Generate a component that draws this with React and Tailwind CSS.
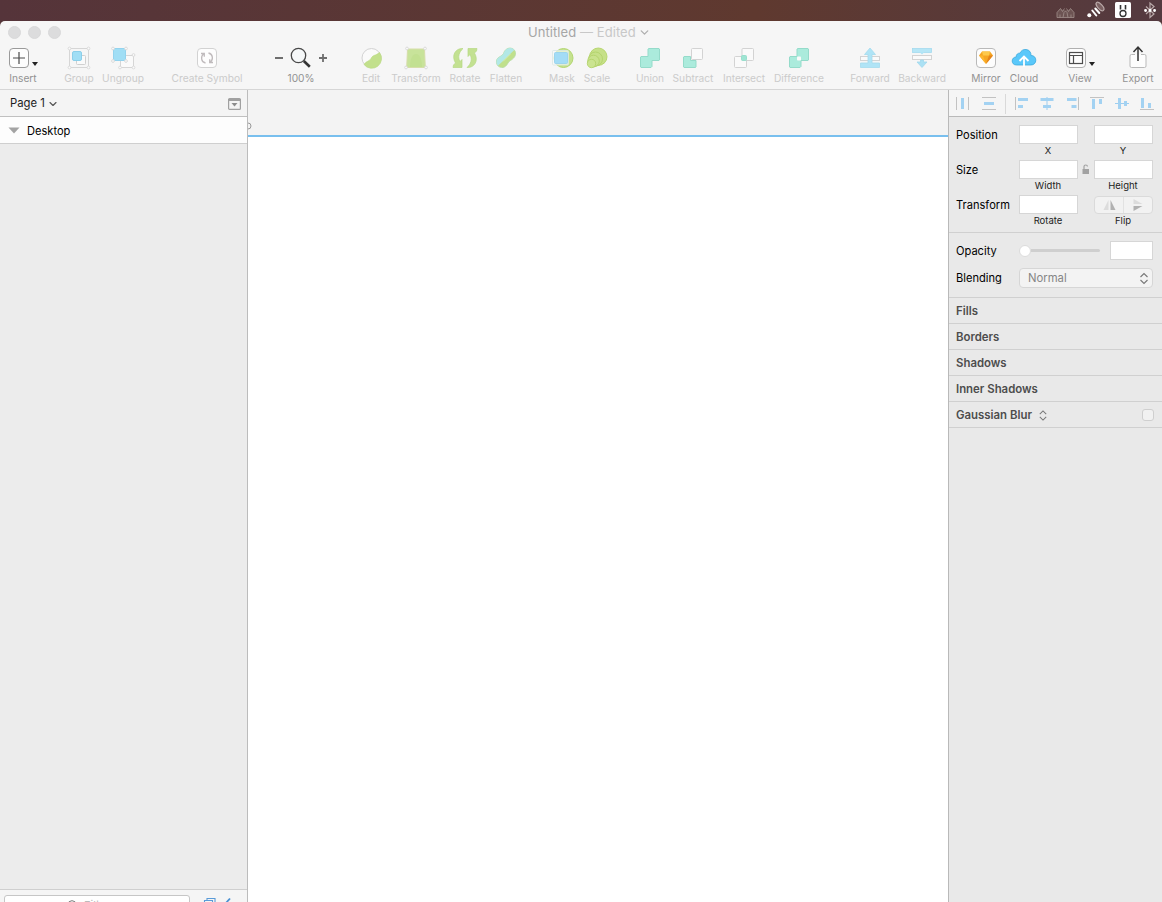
import clsx from "clsx";
import { ChevronDown } from "lucide-react";

const Icon = ({ children }) => (
    <svg width="24" height="24" viewBox="0 0 24 24" fill="none" className="shrink-0 overflow-visible">
        {children}
    </svg>
);

const Dots = ({ points }) => points.map(([x, y]) => (
    <circle key={`${x}-${y}`} cx={x} cy={y} r="1.4" fill="#fafafa" stroke="#d4d4d4" strokeWidth="0.8" />
));

const Box = ({ x = 2, stroke = "#b9b9b9" }) => (
    <rect x={x + 0.5} y="2.5" width="19" height="19" rx="3.5" fill="#fdfdfd" stroke={stroke} />
);

const icons = {
    insert: (
        <Icon>
            <Box x={-2} stroke="#9a9a9a" />
            <path d="M8 6v12M2 12h12" stroke="#4a4a4a" strokeWidth="1.2" />
            <path d="M21 16h6l-3 4z" fill="#222" />
        </Icon>
    ),
    group: (
        <Icon>
            <rect x="2.5" y="2.5" width="19" height="19" stroke="#d6d6d6" />
            <rect x="9.5" y="9.5" width="9" height="9" rx="1" fill="#fafafa" stroke="#d0d0d0" />
            <rect x="5.5" y="5.5" width="9" height="9" rx="1.5" fill="#a0def5" stroke="#8bcfea" />
            <Dots points={[[2.5, 2.5], [21.5, 2.5], [2.5, 21.5], [21.5, 21.5]]} />
        </Icon>
    ),
    ungroup: (
        <Icon>
            <rect x="9.5" y="9.5" width="13" height="12" fill="#fafafa" stroke="#d6d6d6" />
            <rect x="2.5" y="2.5" width="12" height="12" rx="1" fill="#a0def5" stroke="#93d3ee" />
            <Dots points={[[2, 2.5], [15, 2.5], [2, 15], [15, 15], [22.5, 9], [9, 21.5], [22.5, 21.5]]} />
        </Icon>
    ),
    symbol: (
        <Icon>
            <Box stroke="#d2d2d2" />
            <path d="M10.5 17c-4.500-1-5-6.500-2-9M6 7.500h3.300v3.300M13.500 7c4.500 1 5 6.500 2 9M18 16.500h-3.300v-3.300" stroke="#c0bbbd" strokeWidth="1.3" />
        </Icon>
    ),
    zoom: (
        <Icon>
            <path d="M-14 12h8M30 12h8M34 8v8" stroke="#6e6e6e" strokeWidth="1.8" />
            <circle cx="9.5" cy="9.5" r="7.2" fill="#f5f7f8" stroke="#484848" strokeWidth="1.3" />
            <path d="M14.8 15l6 5.8" stroke="#333" strokeWidth="2.6" />
        </Icon>
    ),
    edit: (
        <Icon>
            <circle cx="12.5" cy="12" r="9.5" fill="#fafafa" stroke="#d3d3d3" />
            <path d="M20.5 6.500A9.800 9.800 0 1 1 5 18.500C7 15 10.500 15.500 12 12.500C14 8.500 16.500 10 20.500 6.500z" fill="#c2e08c" stroke="#b8d97f" strokeWidth="0.6" />
        </Icon>
    ),
    transform: (
        <Icon>
            <path d="M3.5 3h17l.8 18.5H2.700z" fill="#c8e39a" stroke="#d6dea9" />
            <path d="M6 21c0-9 3-13 6-13s6 4 6 13z" fill="#b9dc84" opacity=".4" />
            <Dots points={[[3, 2.5], [21, 2.5], [2, 21.5], [22, 21.5]]} />
        </Icon>
    ),
    rotate: (
        <Icon>
            <path d="M10 2.500C2.500 2-2 9.500 2.500 17L.5 19L0 21.500h9V13.500L7 15.500C4.500 11 6 6 10 2.500z" fill="#c3e191" stroke="#b6d884" strokeWidth="0.7" />
            <path d="M14 21.500C21.500 22 26 14.500 21.500 7L23.500 5L24 2.500h-9V10.500L17 8.500C19.500 13 18 18 14 21.500z" fill="#c3e191" stroke="#b6d884" strokeWidth="0.7" />
        </Icon>
    ),
    flatten: (
        <Icon>
            <path d="M2.500 15C3 10.500 7.500 11 9.500 7.500C11.500 1 18.500.5 21 5C23 10 19 13 16.500 14.500C13.500 16 13.500 20.500 9 21.500C5 22 2 19 2.500 15z" fill="#c0e08c" stroke="#b5dca5" strokeWidth="0.8" />
            <path d="M2.500 15C3 10.500 7.500 11 9.500 7.500C11.500 1.500 17.500.8 20.300 4L4 19.800C2.800 18.500 2.200 17 2.500 15z" fill="#b2e8e6" />
            <path d="M9 15.500L16.500 8" stroke="#d9eeb0" strokeWidth="0.8" />
        </Icon>
    ),
    mask: (
        <Icon>
            <circle cx="13.5" cy="12" r="9.5" fill="#c5e28e" stroke="#b3d672" />
            <rect x="2.5" y="4.5" width="16" height="14.5" rx="1" fill="#fafafa" fillOpacity=".6" stroke="#d9e6e2" strokeWidth="0.8" />
            <rect x="4.5" y="6.500" width="13" height="11" rx="1" fill="#a3dcf6" stroke="#92d0ef" strokeWidth="0.8" />
        </Icon>
    ),
    scale: (
        <Icon>
            <path d="M2.500 15.500L6 6.500L20 17L9 21.500z" fill="#c6e088" />
            <circle cx="13.3" cy="10.7" r="8.7" fill="#c6e088" stroke="#b3d468" strokeWidth="0.9" />
            <circle cx="10.5" cy="13" r="7" fill="#c6e088" stroke="#b0d067" strokeWidth="0.8" />
            <circle cx="8.5" cy="15" r="5.8" fill="#c9e28d" stroke="#b0d067" strokeWidth="0.8" />
            <circle cx="6.5" cy="17.500" r="4.2" fill="#cbe490" stroke="#b0d067" strokeWidth="0.8" />
        </Icon>
    ),
    union: (
        <Icon>
            <path d="M11 2.500h10l.5.5v11l-.5.500h-7v6l-1 1H3l-.5-.5V11l.5-.5h7V3z" fill="#abebdc" stroke="#95dbca" />
        </Icon>
    ),
    subtract: (
        <Icon>
            <rect x="10.5" y="2.5" width="11" height="11" rx="1" fill="#fafafa" stroke="#d3d3d3" />
            <path d="M9.500 10.500H3l-.5.5v10l.5.500h11.500l.5-.5v-6.500h-5.500z" fill="#abebdc" stroke="#95dbca" />
        </Icon>
    ),
    intersect: (
        <Icon>
            <rect x="2.5" y="10.5" width="12" height="11" rx="1" fill="#fafafa" stroke="#d3d3d3" />
            <rect x="10" y="2.5" width="11.5" height="12" rx="1" fill="#fafafa" stroke="#d3d3d3" />
            <rect x="9.5" y="9.5" width="5" height="5" rx="1" fill="#9fe5d3" stroke="#98dfcd" />
        </Icon>
    ),
    difference: (
        <Icon>
            <path d="M11 2.500h10l.5.5v11l-.5.500h-7v6l-1 1H3l-.5-.5V11l.5-.5h7V3z" fill="#abebdc" stroke="#95dbca" />
            <rect x="10" y="10.5" width="4" height="4" rx=".8" fill="#fafafa" />
        </Icon>
    ),
    forward: (
        <Icon>
            <rect x="2.5" y="10.5" width="19" height="4" fill="#fafafa" stroke="#d3d3d3" />
            <path d="M12 2l5.500 6.500H14V17h7.500v4.500h-19V17H10V8.500H6.500z" fill="#b0e4f6" stroke="#a5daee" strokeWidth="0.8" />
        </Icon>
    ),
    backward: (
        <Icon>
            <rect x="2.5" y="2.5" width="19" height="4" fill="#b6e6f6" stroke="#a5daee" strokeWidth="0.8" />
            <path d="M9.500 6h5L12 8.500z" fill="#b0e4f6" />
            <rect x="2.5" y="9.5" width="19" height="4" fill="#fafafa" stroke="#d3d3d3" />
            <path d="M10.500 14h3v2H17l-5 5.500L7 16h3.500z" fill="#abe1f4" stroke="#a2d8ec" strokeWidth="0.8" />
        </Icon>
    ),
    mirror: (
        <Icon>
            <Box />
            <path d="M8 5.500h8l3 4-7 8.500-7-8.500z" fill="#f6a623" />
            <path d="M8 5.500h8l-1 4H9z" fill="#fdc94b" />
            <path d="M5 9.500h4l3 8.500z" fill="#fdb62f" />
            <path d="M15 9.500h4L12 18z" fill="#e4831b" />
        </Icon>
    ),
    cloud: (
        <Icon>
            <path d="M4.500 19C1.500 19 .2 17 .2 15c0-2.500 1.800-4 4-4C4 8.500 6 6.800 8 7.200C9 4.500 11.500 3.200 14 3.500c3.500.3 5.200 3 5 6c3 0 4.800 2 4.800 4.700c0 2.800-2 4.800-5 4.800z" fill="#5ac8fa" stroke="#3aa9dd" strokeWidth="0.8" />
            <path d="M12 21v-9.500M7.500 15L12 10.500l4.500 4.500" stroke="#fff" strokeWidth="1.8" />
        </Icon>
    ),
    view: (
        <Icon>
            <Box x={-2} stroke="#b0b0b0" />
            <rect x="1.5" y="6.5" width="13" height="11" stroke="#4d4d4d" strokeWidth="1.2" />
            <path d="M1.500 9.500h13M5.500 9.500v8" stroke="#4d4d4d" strokeWidth="1.2" />
            <path d="M21 16h6l-3 4z" fill="#222" />
        </Icon>
    ),
    export: (
        <Icon>
            <path d="M9 8.500H5.500q-1.500 0-1.500 1.500v10q0 1.500 1.500 1.500h13q1.500 0 1.500-1.500V10q0-1.500-1.500-1.500H15" fill="#fdfdfd" stroke="#b9b9b9" />
            <path d="M12 15V1.500M7.500 6L12 1l4.500 5" stroke="#333" strokeWidth="1.5" />
        </Icon>
    ),
};

const tools = [
    { icon: "insert", label: "Insert", className: "w-[28px] ml-[9px]", active: true },
    { icon: "group", label: "Group", className: "w-[30px] ml-[27px]" },
    { icon: "ungroup", label: "Ungroup", className: "w-[42px] ml-[8px]" },
    { icon: "symbol", label: "Create Symbol", className: "w-[70px] ml-[28px]" },
    { icon: "zoom", label: "100%", className: "w-[54px] ml-[32px]", active: true },
    { icon: "edit", label: "Edit", className: "w-[20px] ml-[33px]" },
    { icon: "transform", label: "Transform", className: "w-[48px] ml-[11px]" },
    { icon: "rotate", label: "Rotate", className: "w-[32px] ml-[9px]" },
    { icon: "flatten", label: "Flatten", className: "w-[34px] ml-[8px]" },
    { icon: "mask", label: "Mask", className: "w-[26px] ml-[26px]" },
    { icon: "scale", label: "Scale", className: "w-[26px] ml-[9px]" },
    { icon: "union", label: "Union", className: "w-[28px] ml-[26px]" },
    { icon: "subtract", label: "Subtract", className: "w-[42px] ml-[8px]" },
    { icon: "intersect", label: "Intersect", className: "w-[42px] ml-[9px]" },
    { icon: "difference", label: "Difference", className: "w-[50px] ml-[9px]" },
    { icon: "forward", label: "Forward", className: "w-[40px] ml-[26px]" },
    { icon: "backward", label: "Backward", className: "w-[46px] ml-[9px]" },
    { icon: "mirror", label: "Mirror", className: "w-[28px] ml-[27px]", active: true },
    { icon: "cloud", label: "Cloud", className: "w-[28px] ml-[10px]", active: true },
    { icon: "view", label: "View", className: "w-[24px] ml-[30px]", active: true },
    { icon: "export", label: "Export", className: "w-[32px] ml-[30px]", active: true },
];

const MenuBar = () => (
    <div className="h-[21px] shrink-0 flex items-start justify-end bg-linear-to-r from-[#55343a] via-[#5f392f] via-65% to-[#543a40]">
        <svg width="112" height="20" viewBox="0 0 112 20" fill="none">
            <path d="M7 17.500v-5l3.500-4 2 1.500h6l2-1.500 3.500 4v5z" fill="#6c5352" />
            <path d="M7 17.500v-5l3.500-4 2 3 2-3M24 17.500v-5l-3.500-4-2 3-2-3M10 17.500v-3M13 17.500l1-5 1.500-1.500 1.500 1.500 1 5M21 17.500v-3M7 17.500h17" stroke="#a18f8c" strokeWidth="0.8" />
            <ellipse cx="50" cy="6.5" rx="2.3" ry="5.2" transform="rotate(-42 50 6.500)" fill="#7b6162" stroke="#b9a9a8" strokeWidth="1.2" />
            <path d="M42.300 10.500l4 5M45.300 8.500l4 4.500" stroke="#fff" strokeWidth="2" strokeLinecap="round" />
            <circle cx="39.3" cy="15.3" r="2" fill="#fff" />
            <rect x="65" y="2" width="16" height="16" rx="1.5" fill="#fff" />
            <circle cx="73" cy="13.5" r="3" stroke="#333" strokeWidth="1.3" />
            <path d="M70.500 5v4.500M75.500 5v4.500" stroke="#333" strokeWidth="1.6" />
            <path d="M96 6.500l8 7.500-4 3.500V3l4 3.500-8 7.500" stroke="#b9a9a9" strokeWidth="1.2" />
            <path d="M95.500 10.500h.1M100 10.500h.1M104.500 10.500h.1" stroke="#fff" strokeWidth="2.8" strokeLinecap="round" />
        </svg>
    </div>
);

const Toolbar = () => (
    <header className="h-[69px] shrink-0 rounded-t-[5px] bg-[#f6f6f6] border-b border-[#d6d6d6]">
        <div className="h-[23px] flex items-center">
            <div className="flex gap-[7px] pl-[7.5px] w-[528px]">
                <span className="size-[13px] rounded-full bg-[#dcdcdd] border border-[#d9d9da]" />
                <span className="size-[13px] rounded-full bg-[#dcdcdd] border border-[#d9d9da]" />
                <span className="size-[13px] rounded-full bg-[#dcdcdd] border border-[#d9d9da]" />
            </div>
            <p className="flex items-center text-[13px] tracking-[0.07px] text-[#c8c8c8] whitespace-pre">
                <span className="text-[#a6a6a6]">Untitled</span> — Edited
                <ChevronDown size={13} strokeWidth={2.5} className="ml-[2px] text-[#b0b0b0]" />
            </p>
        </div>
        <div className="flex pt-[2px]">
            {
                tools.map(({ icon, label, className, active }) => (
                    <div key={icon} className={clsx("flex flex-col items-center shrink-0", className)}>
                        {icons[icon]}
                        <span className={clsx("mt-[1px] text-[10.2px] leading-[15px] whitespace-nowrap", active ? "text-[#939393]" : "text-[#cbcbcb]")}>{label}</span>
                    </div>
                ))
            }
        </div>
    </header>
);

const Sidebar = () => (
    <aside className="w-[248px] shrink-0 flex flex-col bg-[#ececec] border-r border-[#bcbcbc]">
        <div className="h-[27px] shrink-0 flex items-center justify-between pl-[10px] pr-[6px] bg-[#f4f4f4] border-b border-[#c0c0c0]">
            <span className="flex items-center gap-[2px] pt-px text-[11.3px] text-[#1c1c1c]">
                Page 1
                <ChevronDown size={12} strokeWidth={2.3} className="text-[#555]" />
            </span>
            <svg width="13" height="12" viewBox="0 0 13 12" fill="none" className="mt-[1px]">
                <rect x=".6" y=".6" width="11.8" height="10.8" rx="1" stroke="#a0a0a0" strokeWidth="1.2" />
                <path d="M0 1h13v2H0z" fill="#a0a0a0" />
                <path d="M3.500 5h6l-3 3.500z" fill="#8c8c8c" />
            </svg>
        </div>
        <div className="h-[27px] shrink-0 flex items-center gap-[7px] pl-[8px] bg-[#fdfdfd] border-b border-[#cfcfcf]">
            <svg width="12" height="7" viewBox="0 0 12 7"><path d="M.5.5h11L6 6.500z" fill="#a3a3a3" /></svg>
            <span className="pt-[3px] text-[11.1px] text-black">Desktop</span>
        </div>
        <div className="flex-1" />
        <div className="h-[13px] shrink-0 overflow-hidden flex items-start pt-[5px] pl-[4px] bg-[#f5f5f5] border-t border-[#cfcfcf]">
            <div className="w-[186px] h-[22px] shrink-0 flex gap-[7px] pt-[4px] pl-[62px] bg-white border border-[#c6c6c6] rounded-[3px]">
                <svg width="10" height="10" viewBox="0 0 10 10" fill="none"><circle cx="5" cy="4.5" r="3.8" stroke="#777" /></svg>
                <span className="text-[11px] leading-[11px] text-[#bbb]">Filter</span>
            </div>
            <svg width="34" height="12" viewBox="0 0 34 12" fill="none" className="ml-[13px] mt-[2px]">
                <path d="M4 3V1.500h8V9M1.500 3.500h8V10h-8z" stroke="#5a9bd8" strokeWidth="1.1" />
                <path d="M22 7l5-5.500" stroke="#4a90d2" strokeWidth="1.8" />
            </svg>
        </div>
    </aside>
);

const alignIcons = [
    { line: "M.5 1v13M12.500 1v13", bars: "M6.500 2v11" },
    { line: "M0 1.500h14M0 13.500h14", bars: "M2 7.500h10" },
    { line: "M.5 1v13", bars: "M3 3.500h10M3 10.500h5" },
    { line: "M7 1v13", bars: "M.5 3.500h13M3 10.500h8", blue: true },
    { line: "M13.500 1v13", bars: "M2 3.500h9.500M6.500 10.500h5" },
    { line: "M0 1.500h14", bars: "M3.500 3v10M10.500 3v5" },
    { line: "M0 7.500h14", bars: "M4.500 2v11M10.500 5v5", blue: true },
    { line: "M0 13.500h14", bars: "M2.500 2v10M9.500 7v5" },
];

const AlignIcon = ({ line, bars, blue }) => (
    <svg width="14" height="15" viewBox="0 0 14 15" fill="none" className="shrink-0 overflow-visible">
        <path d={line} stroke={blue ? "#9bcdf0" : "#c2c2c2"} />
        <path d={bars} stroke="#a3d2f2" strokeWidth="3" />
    </svg>
);

const Field = ({ label, className = "w-[59px]" }) => (
    <div className={clsx("shrink-0 flex flex-col items-center", className)}>
        <div className="w-full h-[19px] bg-white border border-[#d6d6d6]" />
        {label && <span className="pr-px text-[9.5px] leading-[14px] text-[#1c1c1c]">{label}</span>}
    </div>
);

const Row = ({ label, children }) => (
    <div className="h-[35px] flex items-start">
        <span className="w-[70px] shrink-0 pl-[7px] text-[11.1px] leading-[21px] text-black">{label}</span>
        {children}
    </div>
);

const UpDown = ({ className }) => (
    <svg viewBox="0 0 8 12" fill="none" className={className}>
        <path d="M.5 4.500L4 1l3.500 3.500M.5 7.500L4 11l3.500-3.500" stroke="#777" strokeWidth="1.1" />
    </svg>
);

const Inspector = () => (
    <aside className="w-[214px] shrink-0 bg-[#e9e9e9] border-l border-[#b9b9b9]">
        <div className="h-[27px] flex items-center pl-[7px] pt-px bg-[#f5f5f5] border-b border-[#b9b9b9]">
            <div className="flex gap-[12px]">
                {alignIcons.slice(0, 2).map((icon) => <AlignIcon key={icon.bars} {...icon} />)}
            </div>
            <span className="w-px h-[20px] ml-[9px] mr-[9px] bg-[#d9d9d9]" />
            <div className="flex gap-[11px]">
                {alignIcons.slice(2).map((icon) => <AlignIcon key={icon.bars} {...icon} />)}
            </div>
        </div>
        <div className="h-[116px] pt-[8px] border-b border-[#d0d0d0]">
            <Row label="Position">
                <Field label="X" />
                <span className="w-[16px]" />
                <Field label="Y" />
            </Row>
            <Row label="Size">
                <Field label="Width" />
                <svg width="16" height="19" viewBox="0 0 16 19" fill="none">
                    <rect x="4.5" y="9" width="6.5" height="5" fill="#a2a2a2" />
                    <path d="M6 9V6.500Q6 5 7.700 5T9.500 6.500" stroke="#a2a2a2" strokeWidth="1.2" />
                </svg>
                <Field label="Height" />
            </Row>
            <Row label="Transform">
                <Field label="Rotate" />
                <span className="w-[16px]" />
                <div className="w-[59px] flex flex-col items-center">
                    <div className="w-full h-[18px] mt-px flex rounded-[4px] bg-[#f2f2f2] border border-[#dadada]">
                        <svg width="57" height="16" viewBox="0 0 57 16">
                            <path d="M28.500 0v16" stroke="#e2e2e2" />
                            <path d="M13.500 3v10H8.500z" fill="#dcdcdc" />
                            <path d="M15.500 3v10h5z" fill="#b1b1b1" />
                            <path d="M38.500 2v5h9z" fill="#dcdcdc" />
                            <path d="M38.500 9h9l-9 5z" fill="#b1b1b1" />
                        </svg>
                    </div>
                    <span className="pr-px text-[9.5px] leading-[14px] text-[#1c1c1c]">Flip</span>
                </div>
            </Row>
        </div>
        <div className="h-[65px] pt-[8px] border-b border-[#d0d0d0]">
            <div className="h-[27px] flex items-start">
                <span className="w-[70px] pl-[7px] text-[11.1px] leading-[21px] text-black">Opacity</span>
                <div className="w-[81px] h-[19px] flex items-center">
                    <span className="size-[12px] shrink-0 rounded-full bg-white border border-[#dcdcdc]" />
                    <span className="h-[3px] flex-1 rounded-r-full bg-[#cfcfcf]" />
                </div>
                <span className="w-[10px]" />
                <Field className="w-[43px]" />
            </div>
            <div className="flex items-start">
                <span className="w-[70px] pl-[7px] text-[11.1px] leading-[21px] text-black">Blending</span>
                <div className="w-[134px] h-[20px] flex items-center justify-between pl-[8px] pr-[4px] rounded-[4px] bg-[#f3f3f3] border border-[#d6d6d6] text-[11.3px] text-[#868686]">
                    <span>Normal</span>
                    <UpDown className="w-[8px] h-[13px]" />
                </div>
            </div>
        </div>
        {
            ["Fills", "Borders", "Shadows", "Inner Shadows", "Gaussian Blur"].map((title) => (
                <div key={title} className="h-[26px] flex items-center pl-[7px] pr-[8px] pt-px border-b border-[#d0d0d0]">
                    <h2 className="pt-[2px] text-[11.4px] font-semibold text-[#4d4d4d]">{title}</h2>
                    {
                        title === "Gaussian Blur" && (
                            <>
                                <UpDown className="w-[8px] h-[11px] ml-[7px]" />
                                <span className="size-[12px] ml-auto rounded-[3px] bg-[#f1f1f1] border border-[#cfcfcf]" />
                            </>
                        )
                    }
                </div>
            ))
        }
    </aside>
);

const App = () => {
    return (
        <div className="h-[902px] w-[1162px] overflow-hidden flex flex-col bg-[#55373a] font-['Inter',sans-serif]">
            <MenuBar />
            <Toolbar />
            <div className="flex-1 min-h-0 flex">
                <Sidebar />
                <main className="flex-1 flex flex-col bg-white">
                    <div className="h-[47px] shrink-0 flex items-end bg-[#f3f3f3] border-b-2 border-[#78bfee]">
                        <svg width="4" height="14" viewBox="0 0 4 14" fill="none">
                            <path d="M0 2q3 0 3 3t-3 3" stroke="#999" />
                        </svg>
                    </div>
                </main>
                <Inspector />
            </div>
        </div>
    );
};

export default App;
